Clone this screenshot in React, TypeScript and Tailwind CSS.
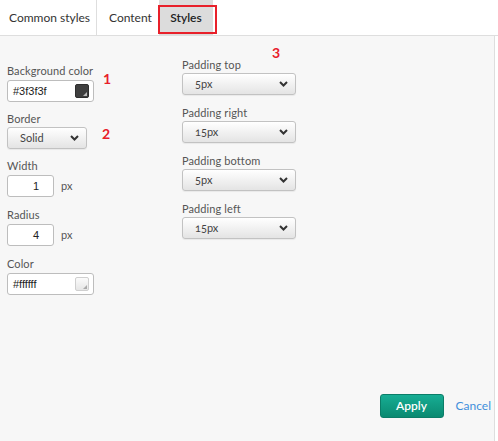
import React from 'react';

const font = { fontFamily: 'Lato, "Noto Sans", sans-serif' };

const Chevron = () => (
  <svg width="9" height="6" viewBox="0 0 9 6" className="shrink-0">
    <path d="M1 1 L4.5 4.5 L8 1" fill="none" stroke="#333" strokeWidth="2" />
  </svg>
);

const Label: React.FC<{ text: string }> = ({ text }) => (
  <div className="h-[14px] text-[11px] leading-[14px] text-[#555] tracking-[0.1px]">{text}</div>
);

const SelectBox: React.FC<{ value: string; width: string }> = ({ value, width }) => (
  <div
    className={`${width} h-[22px] mt-[1px] flex items-center justify-between pl-[12px] pr-[7px] rounded-[3px] border border-[#c2c2c2] bg-gradient-to-b from-white to-[#e4e4e4] shadow-[0_1px_1px_rgba(0,0,0,0.06)]`}
  >
    <span className="text-[11px] text-[#444] oldstyle-nums">{value}</span>
    <Chevron />
  </div>
);

const ColorInput: React.FC<{ value: string; dark?: boolean }> = ({ value, dark }) => (
  <div className="w-[87px] h-[22px] mt-[2px] flex items-center justify-between pl-[5px] pr-[4px] rounded-[3px] border border-[#bdbdbd] bg-white">
    <span className="text-[11px] text-[#222]" style={{ fontFamily: '"Liberation Sans", Arial, sans-serif' }}>
      {value}
    </span>
    <div
      className={`relative w-[14px] h-[14px] rounded-[2px] border ${
        dark ? 'bg-[#3f3f3f] border-[#2e2e2e]' : 'bg-gradient-to-b from-[#fbfbfb] to-[#e6e6e6] border-[#cfcfcf]'
      }`}
    >
      <svg width="4" height="4" viewBox="0 0 4 4" className="absolute right-[1px] bottom-[1px]">
        <path d="M4 0 L4 4 L0 4 Z" fill={dark ? '#bbb' : '#aaa'} />
      </svg>
    </div>
  </div>
);

const NumberInput: React.FC<{ value: string }> = ({ value }) => (
  <div className="flex items-center mt-[2px]">
    <div
      className="w-[47px] h-[22px] flex items-center justify-end pr-[14px] rounded-[3px] border border-[#bdbdbd] bg-white text-[11px] text-[#222]"
      style={{ fontFamily: '"Liberation Sans", Arial, sans-serif' }}
    >
      {value}
    </div>
    <span className="ml-[7px] text-[11px] text-[#555]">px</span>
  </div>
);

export default function App() {
  return (
    <div className="w-[498px] h-[441px] bg-white flex flex-col relative" style={font}>
      {/* Tabs */}
      <div className="h-[36px] flex border-b border-[#dedede] text-[12px] text-[#333]">
        <div className="w-[97px] pl-[9px] flex items-center border-r border-[#dedede]">Common styles</div>
        <div className="w-[62px] pl-[12px] flex items-center">Content</div>
        <div className="w-[54px] bg-[#dcdcdc] flex items-center justify-center font-semibold text-[#222]">Styles</div>
      </div>
      <div className="absolute left-[158px] top-[5px] w-[59px] h-[29px] border-2 border-[#e8202a]" />

      {/* Panel */}
      <div className="flex-1 w-[495px] bg-[#f7f7f7] border-r border-[#dedede] flex flex-col relative">
        <div className="flex">
          <div className="w-[182px] pl-[7px] pt-[28px] flex flex-col gap-[10px]">
            <div>
              <Label text="Background color" />
              <ColorInput value="#3f3f3f" dark />
            </div>
            <div>
              <Label text="Border" />
              <SelectBox value="Solid" width="w-[80px]" />
            </div>
            <div>
              <Label text="Width" />
              <NumberInput value="1" />
            </div>
            <div className="mt-[1px]">
              <Label text="Radius" />
              <NumberInput value="4" />
            </div>
            <div className="mt-[1px]">
              <Label text="Color" />
              <ColorInput value="#ffffff" />
            </div>
          </div>
          <div className="pt-[22px] flex flex-col gap-[11px]">
            {[
              ['Padding top', '5px'],
              ['Padding right', '15px'],
              ['Padding bottom', '5px'],
              ['Padding left', '15px'],
            ].map(([label, value]) => (
              <div key={label}>
                <Label text={label} />
                <SelectBox value={value} width="w-[114px]" />
              </div>
            ))}
          </div>
        </div>

        <span className="absolute left-[103px] top-[32px] text-[14px] font-bold text-[#e8202a]">1</span>
        <span className="absolute left-[102px] top-[87px] text-[14px] font-bold text-[#e8202a]">2</span>
        <span className="absolute left-[272px] top-[6px] text-[14px] font-bold text-[#e8202a]">3</span>

        <div className="mt-auto pb-[23px] pr-[3px] flex items-center justify-end gap-[12px]">
          <button className="w-[64px] h-[24px] rounded-[3px] border border-[#0b7d68] bg-gradient-to-b from-[#17ad94] to-[#0a8a71] text-white text-[12px] font-semibold">
            Apply
          </button>
          <span className="text-[12px] text-[#3f8fdb]">Cancel</span>
        </div>
      </div>
    </div>
  );
}
